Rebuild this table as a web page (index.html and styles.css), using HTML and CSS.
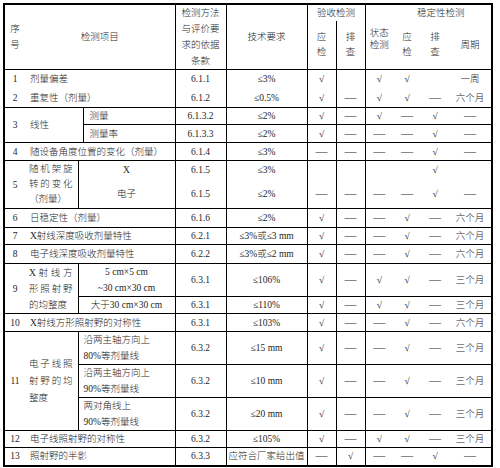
FILE: index.html
```html
<!DOCTYPE html>
<html lang="zh-CN">
<head>
<meta charset="utf-8">
<title>检测项目</title>
<link rel="stylesheet" href="styles.css">
</head>
<body>
<table class="grid">
<colgroup>
<col class="w21"><col class="w53"><col class="w5"><col class="w92"><col class="w51"><col class="w81"><col class="w29"><col class="w29"><col class="w28"><col class="w28"><col class="w28"><col class="w43">
</colgroup>
<thead>
<tr class="h17">
<td rowspan="2" class="n">序<br>号</td>
<td rowspan="2" colspan="3" class="m">检测项目</td>
<td rowspan="2" class="meth">检测方法与评价要求的依据条款</td>
<td rowspan="2">技术要求</td>
<td colspan="2" class="nb">验收检测</td>
<td colspan="4" class="nb stab">稳定性检测</td>
</tr>
<tr class="h47">
<td class="nt two">应<br>检</td>
<td class="nt two">排<br>查</td>
<td class="nt s state">状态<br>检测</td>
<td class="nt s two">应<br>检</td>
<td class="nt s two">排<br>查</td>
<td class="nt s">周期</td>
</tr>
</thead>
<tbody>
<tr class="h19 nb">
<td class="n">1</td><td colspan="3" class="m name">剂量偏差</td><td>6.1.1</td><td>≤3%</td>
<td>√</td><td></td><td>√</td><td>√</td><td></td><td>一周</td>
</tr>
<tr class="h19 nt">
<td class="n">2</td><td colspan="3" class="m name">重复性（剂量）</td><td>6.1.2</td><td>≤0.5%</td>
<td>√</td><td><span class="d">—</span></td><td>√</td><td>√</td><td><span class="d">—</span></td><td>六个月</td>
</tr>
<tr class="h17">
<td rowspan="2" class="n">3</td><td rowspan="2" colspan="2" class="m name">线性</td><td class="sub3">测量</td><td>6.1.3.2</td><td>≤2%</td>
<td>√</td><td><span class="d">—</span></td><td>√</td><td><span class="d">—</span></td><td>√</td><td><span class="d">—</span></td>
</tr>
<tr class="h18">
<td class="sub3">测量率</td><td>6.1.3.3</td><td>≤2%</td>
<td>√</td><td><span class="d">—</span></td><td><span class="d">—</span></td><td><span class="d">—</span></td><td>√</td><td><span class="d">—</span></td>
</tr>
<tr class="h18">
<td class="n">4</td><td colspan="3" class="m name">随设备角度位置的变化（剂量）</td><td>6.1.4</td><td>≤3%</td>
<td><span class="d">—</span></td><td><span class="d">—</span></td><td><span class="d">—</span></td><td><span class="d">—</span></td><td>√</td><td><span class="d">—</span></td>
</tr>
<tr class="h19 nb">
<td rowspan="2" class="n">5</td><td rowspan="2" class="m just l15">随机架旋转的变化（剂量）</td><td colspan="2">X</td><td>6.1.5</td><td>≤3%</td>
<td></td><td></td><td></td><td></td><td>√</td><td></td>
</tr>
<tr class="h29 nt">
<td colspan="2">电子</td><td>6.1.5</td><td>≤2%</td>
<td><span class="d">—</span></td><td><span class="d">—</span></td><td><span class="d">—</span></td><td><span class="d">—</span></td><td>√</td><td><span class="d">—</span></td>
</tr>
<tr class="h19">
<td class="n">6</td><td colspan="3" class="m name">日稳定性（剂量）</td><td>6.1.6</td><td>≤2%</td>
<td>√</td><td><span class="d">—</span></td><td><span class="d">—</span></td><td>√</td><td><span class="d">—</span></td><td>六个月</td>
</tr>
<tr class="h17">
<td class="n">7</td><td colspan="3" class="m name">X射线深度吸收剂量特性</td><td>6.2.1</td><td>≤3%或≤3 mm</td>
<td>√</td><td><span class="d">—</span></td><td><span class="d">—</span></td><td>√</td><td><span class="d">—</span></td><td>六个月</td>
</tr>
<tr class="h19">
<td class="n">8</td><td colspan="3" class="m name">电子线深度吸收剂量特性</td><td>6.2.2</td><td>≤3%或≤2 mm</td>
<td>√</td><td><span class="d">—</span></td><td><span class="d">—</span></td><td>√</td><td><span class="d">—</span></td><td>六个月</td>
</tr>
<tr class="h32">
<td rowspan="2" class="n">9</td><td rowspan="2" class="m just">X射线方形照射野的均整度</td><td colspan="2">5 cm×5 cm<br>~30 cm×30 cm</td><td>6.3.1</td><td>≤106%</td>
<td>√</td><td><span class="d">—</span></td><td>√</td><td>√</td><td><span class="d">—</span></td><td>三个月</td>
</tr>
<tr class="h17">
<td colspan="2">大于30 cm×30 cm</td><td>6.3.1</td><td>≤110%</td>
<td>√</td><td><span class="d">—</span></td><td>√</td><td>√</td><td><span class="d">—</span></td><td>三个月</td>
</tr>
<tr class="h18">
<td class="n">10</td><td colspan="3" class="m name">X射线方形照射野的对称性</td><td>6.3.1</td><td>≤103%</td>
<td>√</td><td><span class="d">—</span></td><td><span class="d">—</span></td><td>√</td><td><span class="d">—</span></td><td>六个月</td>
</tr>
<tr class="h33">
<td rowspan="3" class="n">11</td><td rowspan="3" class="m just l17">电子线照射野的均整度</td><td colspan="2" class="sub2">沿两主轴方向上<br>80%等剂量线</td><td>6.3.2</td><td>≤15 mm</td>
<td>√</td><td><span class="d">—</span></td><td><span class="d">—</span></td><td>√</td><td><span class="d">—</span></td><td>三个月</td>
</tr>
<tr class="h32">
<td colspan="2" class="sub2">沿两主轴方向上<br>90%等剂量线</td><td>6.3.2</td><td>≤10 mm</td>
<td>√</td><td><span class="d">—</span></td><td><span class="d">—</span></td><td>√</td><td><span class="d">—</span></td><td>三个月</td>
</tr>
<tr class="h33">
<td colspan="2" class="sub2">两对角线上<br>90%等剂量线</td><td>6.3.2</td><td>≤20 mm</td>
<td>√</td><td><span class="d">—</span></td><td><span class="d">—</span></td><td>√</td><td><span class="d">—</span></td><td>三个月</td>
</tr>
<tr class="h17">
<td class="n">12</td><td colspan="3" class="m name">电子线照射野的对称性</td><td>6.3.2</td><td>≤105%</td>
<td>√</td><td><span class="d">—</span></td><td>√</td><td>√</td><td><span class="d">—</span></td><td>三个月</td>
</tr>
<tr class="h18">
<td class="n">13</td><td colspan="3" class="m name">照射野的半影</td><td>6.3.3</td><td>应符合厂家给出值</td>
<td><span class="d">—</span></td><td>√</td><td><span class="d">—</span></td><td><span class="d">—</span></td><td>√</td><td><span class="d">—</span></td>
</tr>
</tbody>
</table>
</body>
</html>
```

FILE: styles.css
```css
html, body {
  margin: 0;
  padding: 0;
  background: #fff;
}
body {
  padding: 3px;
}
.grid {
  border-collapse: collapse;
  table-layout: fixed;
  width: 490px;
  border: 2px solid #000;
  font-family: "Liberation Serif", "Noto Sans CJK SC", serif;
  font-size: 9.5px;
  font-weight: 300;
  color: #1e1e1e;
  line-height: 16px;
}
.grid td {
  border: 1px solid #000;
  padding: 0 2px;
  text-align: center;
  vertical-align: middle;
  white-space: normal;
}
.w21 { width: 21px; }
.w53 { width: 53px; }
.w5 { width: 5px; }
.w92 { width: 92px; }
.w51 { width: 51px; }
.w81 { width: 81px; }
.w29 { width: 29px; }
.w28 { width: 28px; }
.w43 { width: 43px; }

.h17 { height: 17px; }
.h18 { height: 18px; }
.h19 { height: 19px; }
.h29 { height: 29px; }
.h32 { height: 32px; }
.h33 { height: 33px; }
.h47 { height: 47px; }

.grid td.n {
  border-right: none;
  padding: 0;
}
.grid td.m {
  border-left: none;
}
.grid td.name {
  text-align: left;
  padding-left: 5px;
}
.grid td.just {
  text-align: justify;
  text-align-last: left;
  padding: 0 5px 0 4px;
}
.grid td.l15 { line-height: 15px; }
.grid td.l17 { line-height: 17px; }
.grid td.sub3 {
  text-align: left;
  padding-left: 6px;
}
.grid td.sub2 {
  text-align: left;
  padding-left: 5px;
}
.grid td.meth {
  padding: 0 4px;
}
.grid .nb td,
.grid td.nb {
  border-bottom: none;
}
.grid .nt td,
.grid td.nt {
  border-top: none;
}
.grid td.stab {
  padding-left: 27px;
}
.grid td.s,
.grid tbody td:nth-last-child(-n+4) {
  border-left: none;
  border-right: none;
}
.grid td.two {
  line-height: 15px;
}
.grid td.state {
  line-height: 12px;
  padding-bottom: 12px;
}
.d {
  font-size: 12px;
  line-height: 1;
}
```
